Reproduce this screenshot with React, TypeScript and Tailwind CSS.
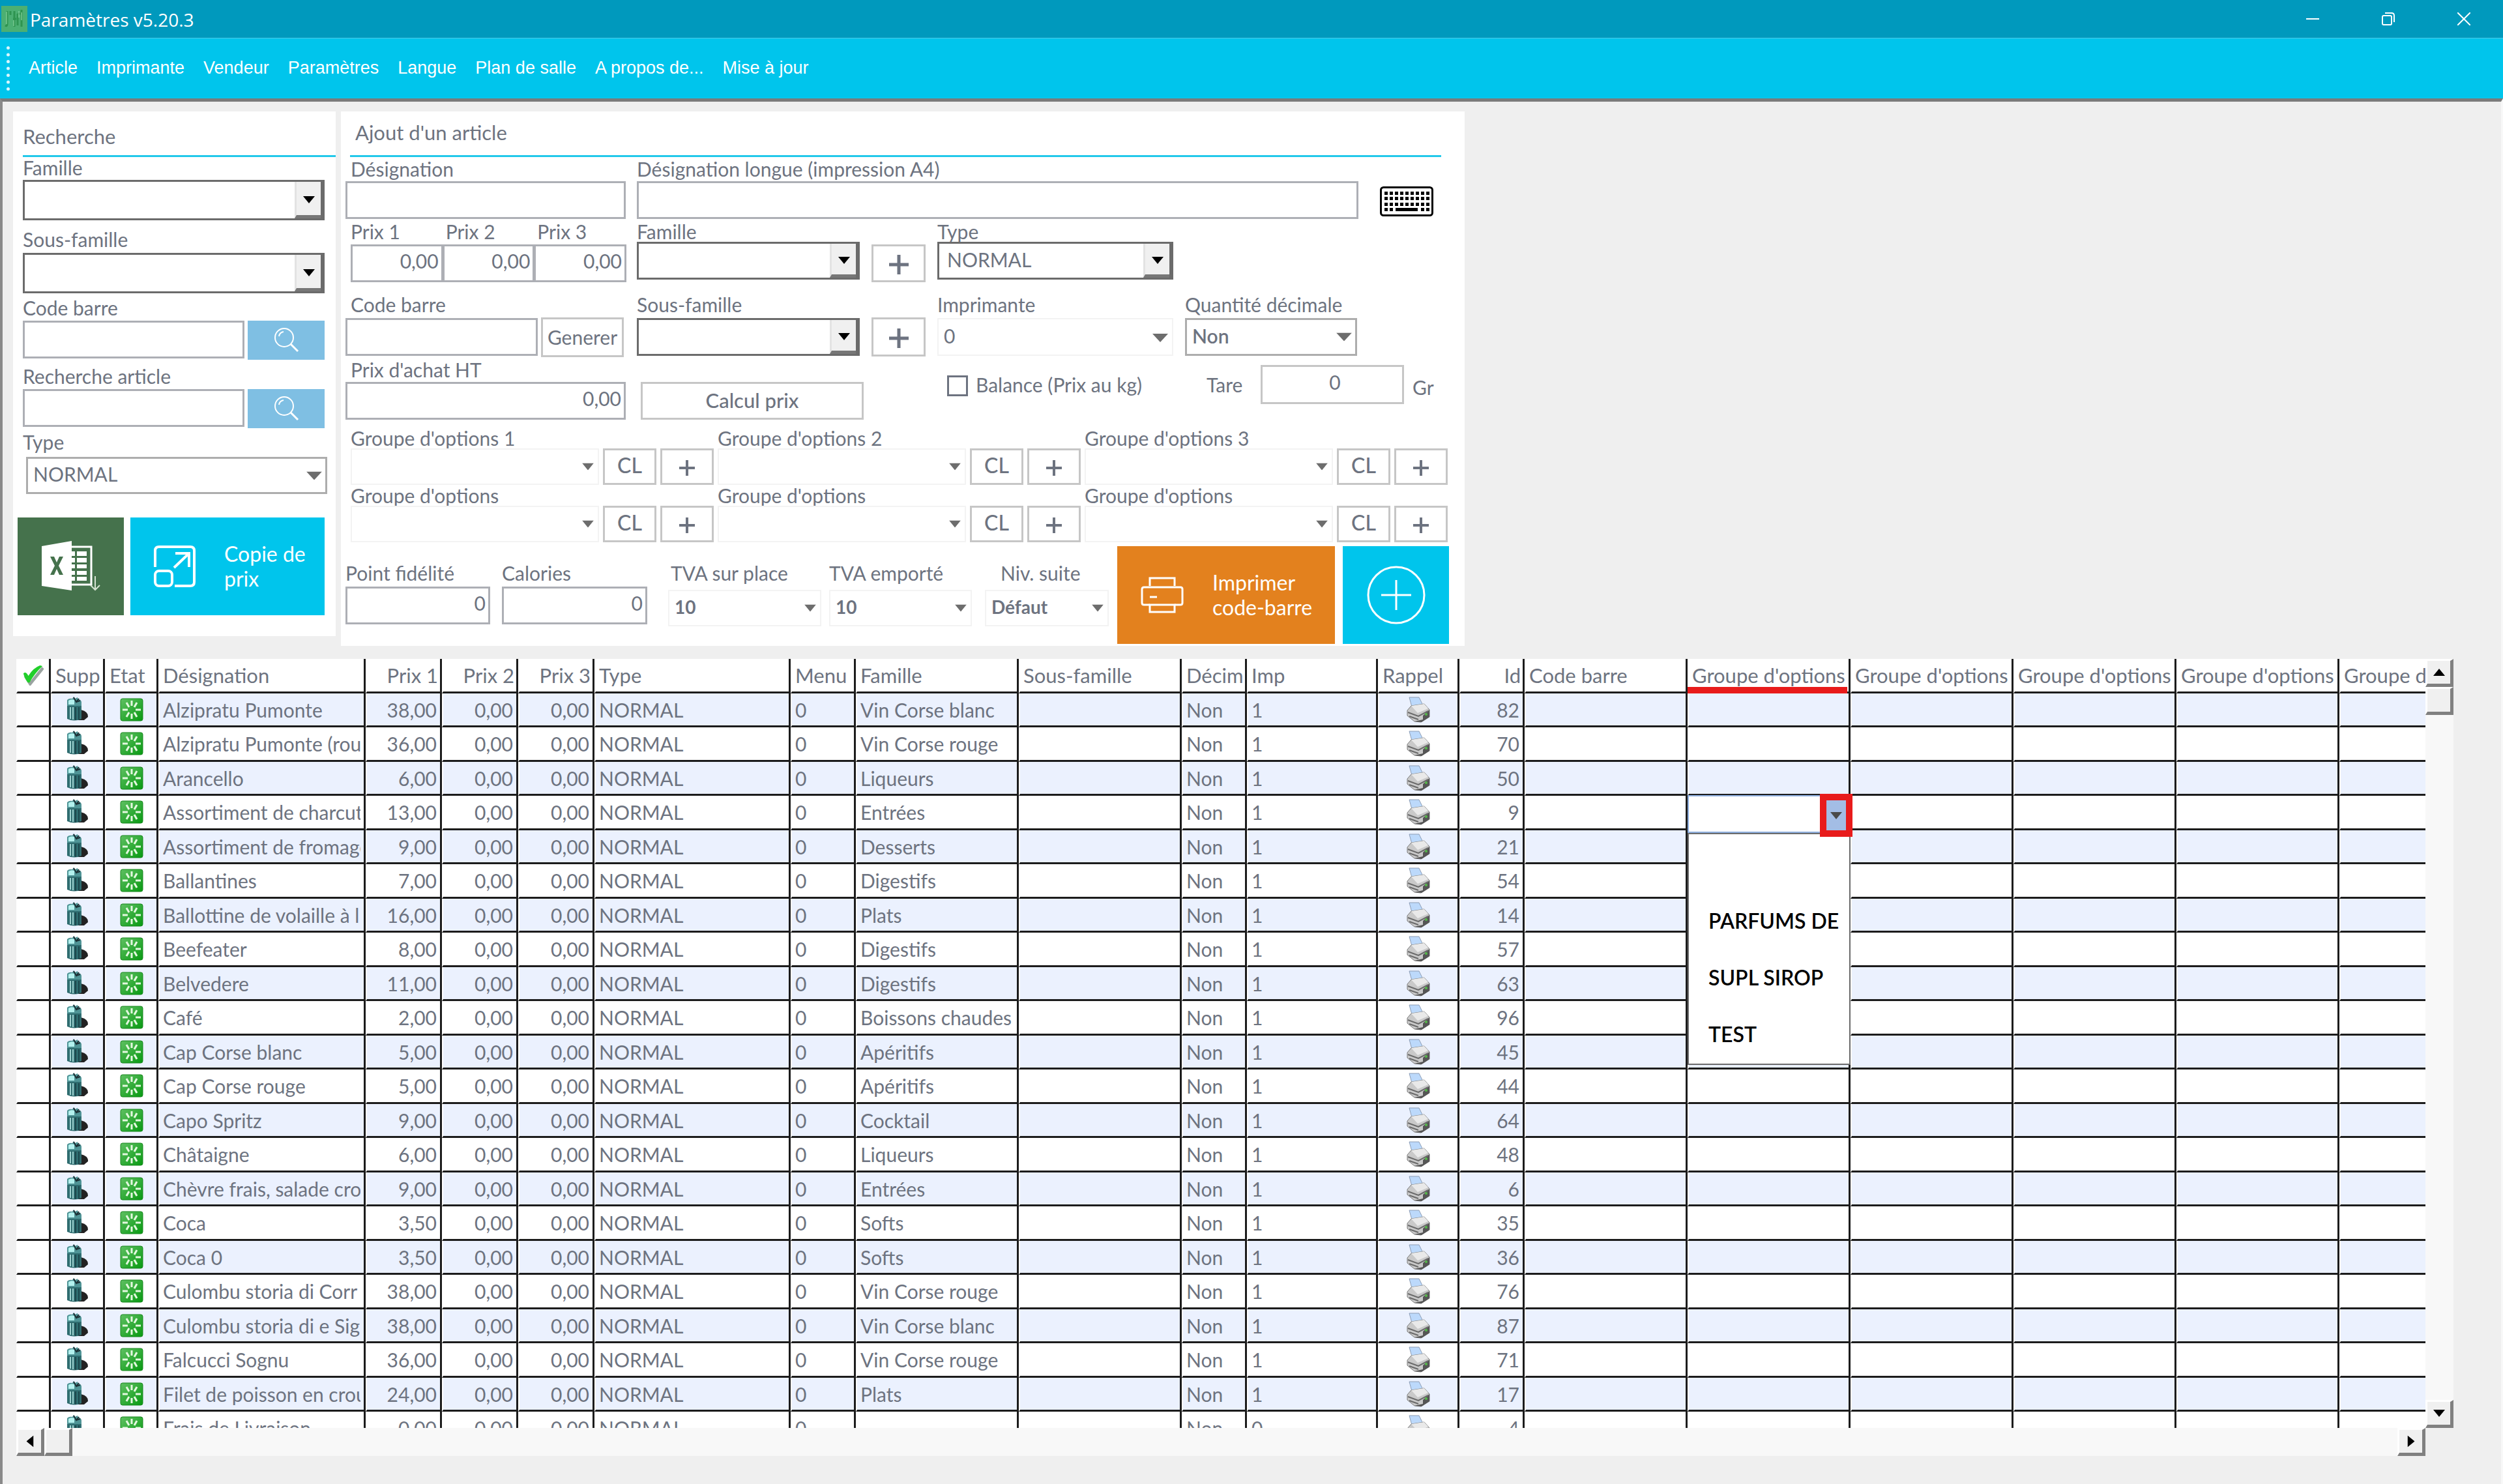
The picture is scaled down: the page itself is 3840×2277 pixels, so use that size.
import { useId } from 'react';
import type { ReactNode } from 'react';
import clsx from 'clsx';

type Article = {
  name: string;
  price: string;
  family: string;
  id: number;
  imp?: string;
};

const menuItems = [
  'Article',
  'Imprimante',
  'Vendeur',
  'Paramètres',
  'Langue',
  'Plan de salle',
  'A propos de...',
  'Mise à jour',
];

const articles: Article[] = [
  { name: 'Alzipratu Pumonte', price: '38,00', family: 'Vin Corse blanc', id: 82 },
  { name: 'Alzipratu Pumonte (rou', price: '36,00', family: 'Vin Corse rouge', id: 70 },
  { name: 'Arancello', price: '6,00', family: 'Liqueurs', id: 50 },
  { name: 'Assortiment de charcut', price: '13,00', family: 'Entrées', id: 9 },
  { name: 'Assortiment de fromage', price: '9,00', family: 'Desserts', id: 21 },
  { name: 'Ballantines', price: '7,00', family: 'Digestifs', id: 54 },
  { name: 'Ballottine de volaille à l', price: '16,00', family: 'Plats', id: 14 },
  { name: 'Beefeater', price: '8,00', family: 'Digestifs', id: 57 },
  { name: 'Belvedere', price: '11,00', family: 'Digestifs', id: 63 },
  { name: 'Café', price: '2,00', family: 'Boissons chaudes', id: 96 },
  { name: 'Cap Corse blanc', price: '5,00', family: 'Apéritifs', id: 45 },
  { name: 'Cap Corse rouge', price: '5,00', family: 'Apéritifs', id: 44 },
  { name: 'Capo Spritz', price: '9,00', family: 'Cocktail', id: 64 },
  { name: 'Châtaigne', price: '6,00', family: 'Liqueurs', id: 48 },
  { name: 'Chèvre frais, salade cro', price: '9,00', family: 'Entrées', id: 6 },
  { name: 'Coca', price: '3,50', family: 'Softs', id: 35 },
  { name: 'Coca 0', price: '3,50', family: 'Softs', id: 36 },
  { name: 'Culombu storia di Corr', price: '38,00', family: 'Vin Corse rouge', id: 76 },
  { name: 'Culombu storia di e Sig', price: '38,00', family: 'Vin Corse blanc', id: 87 },
  { name: 'Falcucci Sognu', price: '36,00', family: 'Vin Corse rouge', id: 71 },
  { name: 'Filet de poisson en crou', price: '24,00', family: 'Plats', id: 17 },
  { name: 'Frais de Livraison', price: '0,00', family: '', id: 4, imp: '0' },
];

const columns = [
  { label: '', width: 'w-[53px]' },
  { label: 'Supp', width: 'w-[83px]' },
  { label: 'Etat', width: 'w-[82px]' },
  { label: 'Désignation', width: 'w-[318px]' },
  { label: 'Prix 1', width: 'w-[117px]', right: true },
  { label: 'Prix 2', width: 'w-[117px]', right: true },
  { label: 'Prix 3', width: 'w-[117px]', right: true },
  { label: 'Type', width: 'w-[301px]' },
  { label: 'Menu', width: 'w-[100px]' },
  { label: 'Famille', width: 'w-[250px]' },
  { label: 'Sous-famille', width: 'w-[250px]' },
  { label: 'Décim', width: 'w-[100px]' },
  { label: 'Imp', width: 'w-[201px]' },
  { label: 'Rappel', width: 'w-[125px]' },
  { label: 'Id', width: 'w-[100px]', right: true },
  { label: 'Code barre', width: 'w-[250px]' },
  { label: "Groupe d'options", width: 'w-[250px]', marked: true },
  { label: "Groupe d'options", width: 'w-[250px]' },
  { label: "Groupe d'options", width: 'w-[250px]' },
  { label: "Groupe d'options", width: 'w-[250px]' },
  { label: "Groupe d'options", width: 'w-[250px]' },
];

/* ---------- Icons ---------- */

function AppIcon() {
  return (
    <svg viewBox="0 0 40 40" className="w-10 h-10">
      <rect width="40" height="40" fill="#4caf72" />
      <path d="M9 8v20q0 4-3 2M14 8v6M20 8v24M25 12v18M31 6v26M18 20h5M25 12h7" fill="none" stroke="#2e9450" strokeWidth="3" />
      <path d="M8 9v19M19 22v9M27 8v10M31 10v12" fill="none" stroke="#9be0b0" strokeWidth="1" />
    </svg>
  );
}

function SearchIcon() {
  return (
    <svg viewBox="0 0 40 40" className="w-10 h-10" fill="none" stroke="#fff" strokeWidth="2">
      <circle cx="17" cy="16" r="14" />
      <path d="M9 14q1-6 7-7" />
      <path d="M27 26l11 11" strokeWidth="3" />
    </svg>
  );
}

function KeyboardIcon() {
  const cols = [9, 17, 25, 33, 41, 49, 57, 65, 73];
  return (
    <svg viewBox="0 0 82 46" className="w-[82px] h-[46px]">
      <rect x="1.5" y="1.5" width="79" height="43" rx="4" fill="#fff" stroke="#000" strokeWidth="3" />
      {[8, 16, 25].map((y) => cols.map((x) => <rect key={`${x}-${y}`} x={x - 2} y={y} width="5" height="5" />))}
      {[9, 17, 65, 73].map((x) => (
        <rect key={x} x={x - 2} y="33" width="5" height="5" />
      ))}
      <rect x="24" y="33" width="34" height="5" />
    </svg>
  );
}

function ExcelIcon() {
  return (
    <svg viewBox="0 0 92 78" className="w-[92px] h-[78px]">
      <path d="M46 9h31v58H46" fill="none" stroke="#fff" strokeWidth="3" />
      <path
        d="M46 16h6v7h-6zM55 16h15v7H55zM46 26h6v7h-6zM55 26h15v7H55zM46 36h6v6h-6zM55 36h15v6H55zM46 46h6v6h-6zM55 46h15v6H55zM46 55h6v6h-6zM55 55h15v6H55z"
        fill="#fff"
      />
      <path d="M1 8L47 0v76L1 69z" fill="#fff" />
      <path d="M14 24h6l4 9 4-9h6l-7 14 7 14h-6l-4-9-4 9h-6l7-14z" fill="#45724c" />
      <path d="M83 54v20M76 68l7 7 7-7" fill="none" stroke="#d5e2d2" strokeWidth="2" />
    </svg>
  );
}

function CopyIcon() {
  return (
    <svg viewBox="0 0 64 64" className="w-16 h-16" fill="none" stroke="#fff" strokeWidth="4">
      <path d="M2 33V8q0-6 6-6h48q6 0 6 6v48q0 6-6 6H32" />
      <rect x="2" y="39" width="26" height="23" rx="6" />
      <path d="M31 34L53 13M33 12h21v21" />
    </svg>
  );
}

function PrinterIcon() {
  return (
    <svg viewBox="0 0 66 58" className="w-[66px] h-[58px]" fill="none" stroke="#fff" strokeWidth="3">
      <path d="M14 15V3h38v12" />
      <path d="M14 44H5q-3 0-3-3V20q0-3 3-3h56q3 0 3 3v21q0 3-3 3h-9" />
      <path d="M14 44h38v11H14zM14 32h11" />
    </svg>
  );
}

function CirclePlusIcon() {
  return (
    <svg viewBox="0 0 90 90" className="w-[90px] h-[90px]" fill="none" stroke="#fff" strokeWidth="3">
      <circle cx="45" cy="45" r="43" />
      <path d="M45 22v46M22 45h46" />
    </svg>
  );
}

function CheckIcon() {
  return (
    <svg viewBox="0 0 34 34" className="ml-[3px] w-8 h-8">
      <path d="M4 18l8 13L33 5" fill="none" stroke="#9aa3a0" strokeWidth="5" />
      <path d="M1 14q4-4 8 4Q17 5 28 1l4 1Q19 14 11 29H8Q2 20 1 14z" fill="#21cf2a" />
    </svg>
  );
}

function BinIcon() {
  return (
    <svg viewBox="0 0 34 38" className="w-[34px] h-[38px]">
      <path d="M22 20q12 3 11 11l-6 5h-9z" fill="#222" />
      <path d="M1 10h22v24q-11 5-22 0z" fill="#2f6d70" />
      <path d="M1 12V5q3-3 8-2l2-3 2 3 4-2 1 3q4 0 5 4v6H1z" fill="#4f9496" />
      <path d="M3 11V6q4-3 9-1v7H3z" fill="#b4f1ee" />
      <path d="M6 16v18M10 16v19" stroke="#9fd3d1" strokeWidth="2" />
      <path d="M14 16v20M19 16v19" stroke="#1c474c" strokeWidth="2" />
      <path d="M11 1l4 7 4-5M15 8l6-2" stroke="#1c3035" strokeWidth="2" fill="none" />
    </svg>
  );
}

function StateIcon() {
  return (
    <svg viewBox="0 0 36 36" className="w-9 h-9">
      <defs>
        <linearGradient id="state" x1="0" y1="0" x2="1" y2="1">
          <stop offset="0" stopColor="#5fc062" />
          <stop offset="1" stopColor="#089a12" />
        </linearGradient>
      </defs>
      <rect x="1" y="1" width="34" height="34" rx="3" fill="url(#state)" stroke="#16861d" />
      <path
        d="M18 4v8M18 24v8M4 18h8M24 18h8M10 7l4 7M22 22l4 7M26 7l-4 7M10 29l4-7"
        stroke="#e3f8df"
        strokeWidth="3"
      />
    </svg>
  );
}

function RowPrinterIcon() {
  return (
    <svg viewBox="0 0 38 40" className="w-[38px] h-10">
      <path d="M5 1h15l7 14-17 4z" fill="#bcd9fb" stroke="#8d9db5" strokeWidth="1" />
      <path d="M2 21l6-7 20-3 8 9v11l-13 8-10-1-11-9z" fill="#c9c9c9" stroke="#7b7b7b" strokeWidth="1" />
      <path d="M8 14l20-3 6 7-16 7z" fill="#e9e9e9" />
      <path d="M26 29l10-9v11l-12 8-11-1 13-3z" fill="#555" />
      <path d="M3 24l16 6 15-8M5 30l14 5" stroke="#6a6a6a" strokeWidth="2" fill="none" />
      <circle cx="31" cy="27" r="2" fill="#54b948" />
    </svg>
  );
}

function Caret({ className }: { className?: string }) {
  return (
    <svg viewBox="0 0 20 10" className={className} fill="currentColor" preserveAspectRatio="none">
      <path d="M0 0h20L10 10z" />
    </svg>
  );
}

/* ---------- Form controls ---------- */

function Field({
  label,
  className,
  labelClass,
  children,
}: {
  label: string;
  className?: string;
  labelClass?: string;
  children: (id: string) => ReactNode;
}) {
  const id = useId();
  return (
    <div className={clsx('flex flex-col', className)}>
      <label htmlFor={id} className={clsx('whitespace-nowrap text-[30px] leading-8', labelClass)}>
        {label}
      </label>
      {children(id)}
    </div>
  );
}

function TextBox({ id, value = '', className }: { id?: string; value?: string; className?: string }) {
  return (
    <input
      id={id}
      defaultValue={value}
      className={clsx('h-[58px] w-full min-w-0 border-[3px] border-[#adafb5] bg-white px-1 pb-2 text-[30px]', className)}
    />
  );
}

type Variant = 'classic' | 'flat' | 'light';

function Select({
  id,
  value = '',
  variant = 'light',
  className,
}: {
  id?: string;
  value?: string;
  variant?: Variant;
  className?: string;
}) {
  return (
    <div className={clsx('relative flex', className)}>
      <select
        id={id}
        defaultValue={value}
        className={clsx(
          'w-full appearance-none bg-white',
          variant === 'classic' && 'border-[3px] border-r-[6px] border-[#6b6b6b] pb-1 pl-3 text-[30px]',
          variant === 'flat' && 'border-[3px] border-[#adadad] pb-1 pl-2 text-[30px]',
          variant === 'light' && 'border-2 border-[#f3f3f3] pb-1 pl-2 text-[28px]',
        )}
      >
        <option>{value}</option>
      </select>
      {variant === 'classic' ? (
        <span className="pointer-events-none absolute inset-y-[3px] right-[6px] flex w-10 items-center justify-center border-b-[5px] border-l-[3px] border-b-[#777] border-l-[#e3e3e3] bg-[#f0f0f0] pt-1">
          <Caret className="h-[11px] w-[18px] text-black" />
        </span>
      ) : (
        <Caret
          className={clsx(
            'pointer-events-none absolute top-1/2 right-2 -translate-y-1/2 text-[#6d6d6d]',
            variant === 'flat' ? 'h-[13px] w-6' : 'h-[11px] w-[18px]',
          )}
        />
      )}
    </div>
  );
}

function PlainButton({ className, children, label }: { className?: string; children: ReactNode; label?: string }) {
  return (
    <button
      aria-label={label}
      className={clsx('flex items-center justify-center border-[3px] border-[#c6c6c6] bg-white', className)}
    >
      {children}
    </button>
  );
}

function PlusButton({ className, big }: { className?: string; big?: boolean }) {
  return (
    <PlainButton label="Ajouter" className={className}>
      <svg viewBox="0 0 30 30" className={big ? 'mt-1 w-[30px] h-[30px]' : 'mt-1 w-6 h-6'}>
        <path d="M15 0v30M0 15h30" stroke="#6d7380" strokeWidth="5" />
      </svg>
    </PlainButton>
  );
}

function SearchButton() {
  return (
    <button aria-label="Rechercher" className="flex w-[118px] items-center justify-center bg-[#7fbfe3]">
      <SearchIcon />
    </button>
  );
}

function OptionGroup({ label }: { label: string }) {
  return (
    <Field label={label} className="flex-1">
      {(id) => (
        <div className="flex h-14 gap-[6px]">
          <Select id={id} className="flex-1" />
          <PlainButton className="w-[82px] pb-1 text-[32px] font-medium">CL</PlainButton>
          <PlusButton className="w-[82px]" />
        </div>
      )}
    </Field>
  );
}

/* ---------- Panels ---------- */

function TitleBar() {
  return (
    <header className="flex h-[59px] shrink-0 items-center border-b border-[#4fcbe6] bg-[#0099bd] pl-[2px] text-white">
      <AppIcon />
      <h1 className="ml-1 flex-1 pt-[2px] font-['Open_Sans',sans-serif] text-[28px]">Paramètres v5.20.3</h1>
      <div className="flex pr-[2px]">
        <button aria-label="Réduire" className="flex w-29 justify-center">
          <svg viewBox="0 0 20 20" className="w-5 h-5" fill="none" stroke="#fff" strokeWidth="2">
            <path d="M0 10h20" />
          </svg>
        </button>
        <button aria-label="Restaurer" className="flex w-29 justify-center">
          <svg viewBox="0 0 20 20" className="w-5 h-5" fill="none" stroke="#fff" strokeWidth="2">
            <rect x="1" y="5" width="14" height="14" rx="2" />
            <path d="M5 1h10q4 0 4 4v10" />
          </svg>
        </button>
        <button aria-label="Fermer" className="flex w-29 justify-center">
          <svg viewBox="0 0 20 20" className="w-5 h-5" fill="none" stroke="#fff" strokeWidth="2">
            <path d="M0 0l20 20M20 0L0 20" />
          </svg>
        </button>
      </div>
    </header>
  );
}

function MenuBar() {
  return (
    <nav className="flex h-[92px] shrink-0 items-center bg-[#00c5ec] pl-[10px] font-['Liberation_Sans',Arial,sans-serif] text-[27px] text-white">
      <span className="mr-[29px] h-[68px] w-0 border-l-[5px] border-dotted border-[#d9f7fd]" />
      <ul className="flex gap-[29px] pb-[2px]">
        {menuItems.map((item) => (
          <li key={item}>
            <a href="#">{item}</a>
          </li>
        ))}
      </ul>
    </nav>
  );
}

function SearchPanel() {
  return (
    <section className="flex h-[805px] w-[495px] flex-col bg-white pl-[15px]">
      <h2 className="border-b-[3px] border-[#22c8ea] pt-5 pb-[11px] text-[31px] leading-9">Recherche</h2>
      <div className="flex flex-col pr-[17px]">
        <Field label="Famille">
          {(id) => <Select id={id} variant="classic" className="mt-[3px] h-[62px]" />}
        </Field>
        <Field label="Sous-famille" className="mt-[13px]">
          {(id) => <Select id={id} variant="classic" className="mt-[5px] h-[62px]" />}
        </Field>
        <Field label="Code barre" className="mt-[6px]">
          {(id) => (
            <div className="mt-[4px] flex h-15 gap-[5px]">
              <TextBox id={id} className="h-15 flex-1" />
              <SearchButton />
            </div>
          )}
        </Field>
        <Field label="Recherche article" className="mt-[9px]">
          {(id) => (
            <div className="mt-[4px] flex h-15 gap-[5px]">
              <TextBox id={id} className="h-15 flex-1" />
              <SearchButton />
            </div>
          )}
        </Field>
        <Field label="Type" className="mt-[5px]">
          {(id) => <Select id={id} value="NORMAL" variant="flat" className="mt-[7px] -mr-1 ml-[5px] h-[57px]" />}
        </Field>
      </div>
      <div className="-ml-2 mt-[36px] flex gap-[10px]">
        <button aria-label="Exporter vers Excel" className="flex h-[150px] w-[163px] items-center justify-center bg-[#45724c]">
          <ExcelIcon />
        </button>
        <button className="flex h-[150px] w-[298px] items-center gap-11 bg-[#00c5ec] pl-9 text-left text-[32px] leading-[38px] text-white">
          <CopyIcon />
          <span>
            Copie de
            <br />
            prix
          </span>
        </button>
      </div>
    </section>
  );
}

function ArticlePanel() {
  const checkId = useId();
  const tareId = useId();
  return (
    <section className="flex h-[820px] w-[1724px] flex-col bg-white pl-[7px]">
      <h2 className="mr-9 ml-[7px] border-b-[3px] border-[#22c8ea] pt-[14px] pb-[17px] pl-2 text-[31px] leading-9">
        Ajout d'un article
      </h2>

      <div className="mt-[2px] flex items-end">
        <Field label="Désignation" labelClass="pl-2" className="w-[430px]">
          {(id) => <TextBox id={id} className="mt-[3px]" />}
        </Field>
        <Field label="Désignation longue (impression A4)" className="ml-[17px] w-[1107px]">
          {(id) => <TextBox id={id} className="mt-[3px]" />}
        </Field>
        <button aria-label="Clavier" className="mb-1 ml-[33px]">
          <KeyboardIcon />
        </button>
      </div>

      <div className="mt-[3px] flex items-start">
        <div className="flex w-[430px] pl-2">
          {['Prix 1', 'Prix 2', 'Prix 3'].map((label, i) => (
            <Field key={label} label={label} className="-mr-px flex-1" labelClass={i > 0 ? 'pl-[5px]' : ''}>
              {(id) => <TextBox id={id} value="0,00" className="mt-[4px] text-right" />}
            </Field>
          ))}
        </div>
        <Field label="Famille" className="ml-[17px] w-[342px]">
          {(id) => <Select id={id} variant="classic" className="h-[58px]" />}
        </Field>
        <PlusButton big className="mt-9 ml-[18px] h-[58px] w-[83px]" />
        <Field label="Type" className="ml-[18px] w-[362px]">
          {(id) => <Select id={id} value="NORMAL" variant="classic" className="h-[58px]" />}
        </Field>
      </div>

      <div className="mt-[18px] flex items-start">
        <Field label="Code barre" labelClass="pl-2" className="w-[295px]">
          {(id) => <TextBox id={id} className="mt-[5px]" />}
        </Field>
        <PlainButton className="mt-9 ml-[5px] h-[61px] w-[127px] text-[30px]">Generer</PlainButton>
        <Field label="Sous-famille" className="ml-5 w-[342px]">
          {(id) => <Select id={id} variant="classic" className="mt-[5px] h-[58px]" />}
        </Field>
        <PlusButton big className="mt-9 ml-[18px] h-[60px] w-[83px]" />
        <Field label="Imprimante" className="ml-[18px] w-[362px]">
          {(id) => (
            <div className="relative mt-[5px] flex h-[58px]">
              <select id={id} defaultValue="0" className="w-full appearance-none border-2 border-[#f3f3f3] pb-1 pl-2 text-[30px]">
                <option>0</option>
              </select>
              <Caret className="pointer-events-none absolute top-6 right-2 h-[13px] w-6 text-[#6d6d6d]" />
            </div>
          )}
        </Field>
        <Field label="Quantité décimale" className="ml-[18px] w-[264px]">
          {(id) => <Select id={id} value="Non" variant="flat" className="mt-[5px] h-[58px] font-semibold" />}
        </Field>
      </div>

      <div className="mt-[3px] flex items-end">
        <Field label="Prix d'achat HT" labelClass="pl-2" className="w-[430px]">
          {(id) => <TextBox id={id} value="0,00" className="mt-[3px] text-right" />}
        </Field>
        <PlainButton className="ml-[23px] h-[58px] w-[342px] pb-[2px] text-[31px] font-medium">Calcul prix</PlainButton>
        <div className="mb-[30px] ml-[128px] flex w-[398px] items-center gap-3 text-[30px] leading-10">
          <input
            type="checkbox"
            id={checkId}
            className="h-8 w-8 appearance-none border-[3px] border-[#6d7380] bg-white"
          />
          <label htmlFor={checkId} className="pb-1">
            Balance (Prix au kg)
          </label>
        </div>
        <div className="mb-[20px] flex items-center text-[30px] leading-[60px]">
          <label htmlFor={tareId} className="w-[83px]">
            Tare
          </label>
          <input
            id={tareId}
            defaultValue="0"
            className="h-[60px] w-[220px] border-[3px] border-[#c6c6c6] pb-2 pl-2 text-center text-[30px]"
          />
          <span className="ml-[13px] pt-2">Gr</span>
        </div>
      </div>

      <div className="mt-3 mr-[26px] ml-2 flex gap-[6px]">
        <OptionGroup label="Groupe d'options 1" />
        <OptionGroup label="Groupe d'options 2" />
        <OptionGroup label="Groupe d'options 3" />
      </div>
      <div className="mr-[26px] ml-2 flex gap-[6px]">
        <OptionGroup label="Groupe d'options" />
        <OptionGroup label="Groupe d'options" />
        <OptionGroup label="Groupe d'options" />
      </div>

      <div className="mt-[6px] flex items-start">
        <Field label="Point fidélité" className="mt-[25px] w-[222px]">
          {(id) => <TextBox id={id} value="0" className="mt-[5px] text-right" />}
        </Field>
        <Field label="Calories" className="mt-[25px] ml-[18px] w-[223px]">
          {(id) => <TextBox id={id} value="0" className="mt-[5px] text-right" />}
        </Field>
        <Field label="TVA sur place" className="mt-[25px] ml-8 w-[235px]" labelClass="pl-1">
          {(id) => <Select id={id} value="10" className="mt-[10px] h-14 font-bold" />}
        </Field>
        <Field label="TVA emporté" className="mt-[25px] ml-3 w-[219px]">
          {(id) => <Select id={id} value="10" className="mt-[10px] h-14 font-bold" />}
        </Field>
        <Field label="Niv. suite" className="mt-[25px] ml-5 w-[190px]" labelClass="pl-6">
          {(id) => <Select id={id} value="Défaut" className="mt-[10px] h-14 font-bold" />}
        </Field>
        <button className="ml-[13px] flex h-[150px] w-[334px] items-center gap-11 bg-[#e3811e] pl-9 text-left text-[32px] leading-[38px] text-white">
          <PrinterIcon />
          <span>
            Imprimer
            <br />
            code-barre
          </span>
        </button>
        <button aria-label="Ajouter l'article" className="ml-3 flex h-[150px] w-[163px] items-center justify-center bg-[#00c5ec]">
          <CirclePlusIcon />
        </button>
      </div>
    </section>
  );
}

/* ---------- Articles grid ---------- */

function OptionsDropdown() {
  return (
    <div className="absolute -top-px -left-[2px] z-10 w-[250px] text-[32px] text-black">
      <div className="flex h-[58px] border-2 border-[#8fb0e0] bg-white" />
      <button
        aria-label="Ouvrir la liste"
        className="absolute -top-[2px] -right-[3px] flex h-[66px] w-[50px] items-center justify-center border-10 border-[#e81b1b] bg-[#a3bde5]"
      >
        <Caret className="h-[11px] w-[18px] text-[#4a4a4a]" />
      </button>
      <ul role="listbox" aria-label="Groupe d'options" className="border-2 border-[#6b6b6b] bg-white pb-1 font-semibold">
        {['', 'PARFUMS DE', 'SUPL SIROP', 'TEST'].map((option) => (
          <li
            key={option}
            role="option"
            aria-selected={option === ''}
            className="h-[87px] overflow-hidden pt-[17px] pl-[30px] leading-[58px] whitespace-nowrap"
          >
            {option}
          </li>
        ))}
      </ul>
    </div>
  );
}

function ArticleRow({ article, open }: { article: Article; open: boolean }) {
  const texts = ['NORMAL', '0', article.family, '', 'Non', article.imp ?? '1'];
  const cell = 'overflow-hidden whitespace-nowrap border-r-[3px] border-b-[3px] border-l-2 border-r-[#1c1c1c] border-b-[#1c1c1c] border-l-white p-0 px-[5px]';
  return (
    <tr className="h-[52px] odd:bg-[#ebf1fe] even:h-[53px]">
      <td className={clsx(cell, 'bg-white')} />
      <td className={cell}>
        <div className="flex h-10 justify-center">
          <BinIcon />
        </div>
      </td>
      <td className={cell}>
        <div className="flex h-10 items-center justify-center">
          <StateIcon />
        </div>
      </td>
      <td className={cell}>
        <div className="overflow-hidden">{article.name}</div>
      </td>
      {[article.price, '0,00', '0,00'].map((price, i) => (
        <td key={i} className={clsx(cell, 'text-right')}>
          {price}
        </td>
      ))}
      {texts.map((text, i) => (
        <td key={i} className={cell}>
          {text}
        </td>
      ))}
      <td className={cell}>
        <div className="flex h-10 justify-center">
          <RowPrinterIcon />
        </div>
      </td>
      <td className={clsx(cell, 'text-right')}>{article.id}</td>
      <td className={cell} />
      <td className={clsx(cell, open && 'relative overflow-visible')}>{open && <OptionsDropdown />}</td>
      <td className={cell} />
      <td className={cell} />
      <td className={cell} />
      <td className={cell} />
    </tr>
  );
}

function ScrollButton({ label, className, children }: { label: string; className?: string; children?: ReactNode }) {
  return (
    <button
      aria-label={label}
      className={clsx(
        'flex h-[43px] w-[43px] shrink-0 items-center justify-center border-t-[3px] border-r-[5px] border-b-[5px] border-l-[3px] border-t-white border-r-[#808080] border-b-[#808080] border-l-white bg-[#f0f0f0]',
        className,
      )}
    >
      {children}
    </button>
  );
}

function ArticleGrid() {
  return (
    <section className="mt-5 mr-[73px] grid min-h-0 flex-1 grid-cols-[1fr_43px] grid-rows-[1fr_43px] pl-[21px]">
      <div className="min-h-0 overflow-hidden bg-white">
        <table className="w-full table-fixed border-separate border-spacing-0 text-[30px] leading-9">
          <thead>
            <tr className="h-[53px] text-left text-[31px]">
              {columns.map((column, i) => (
                <th
                  key={i}
                  className={clsx(
                    'relative overflow-hidden border-r-[3px] border-b-[3px] border-l-2 border-r-[#1c1c1c] border-b-[#1c1c1c] border-l-white p-0 pr-[3px] pl-[5px] font-normal whitespace-nowrap',
                    column.width,
                    column.right && 'text-right',
                    column.marked && 'overflow-visible',
                  )}
                >
                  {i === 0 ? <CheckIcon /> : column.label}
                  {column.marked && <span className="absolute -bottom-[3px] -left-[2px] right-[2px] h-[10px] bg-[#e81b1b]" />}
                </th>
              ))}
            </tr>
          </thead>
          <tbody>
            {articles.map((article) => (
              <ArticleRow key={article.id} article={article} open={article.id === 9} />
            ))}
          </tbody>
        </table>
      </div>
      <div className="flex min-h-0 flex-col bg-[#f8f8f8]">
        <ScrollButton label="Haut">
          <Caret className="h-[11px] w-[18px] rotate-180 text-black" />
        </ScrollButton>
        <ScrollButton label="Position verticale" />
        <ScrollButton label="Bas" className="mt-auto">
          <Caret className="h-[11px] w-[18px] text-black" />
        </ScrollButton>
      </div>
      <div className="flex bg-[#f8f8f8]">
        <ScrollButton label="Gauche">
          <Caret className="h-[11px] w-[18px] rotate-90 text-black" />
        </ScrollButton>
        <ScrollButton label="Position horizontale" />
        <ScrollButton label="Droite" className="ml-auto">
          <Caret className="h-[11px] w-[18px] -rotate-90 text-black" />
        </ScrollButton>
      </div>
    </section>
  );
}

export default function App() {
  return (
    <div className="flex h-screen flex-col overflow-hidden bg-[#efefef] font-['Lato',sans-serif] text-[#6d7380]">
      <TitleBar />
      <MenuBar />
      <main className="flex min-h-0 flex-1 flex-col border-t-[5px] border-r-[3px] border-l-4 border-t-[#7b7b7b] border-r-[#f8f8f8] border-l-[#8a8a8a] pt-[15px] pb-[43px]">
        <div className="flex items-start gap-2 pl-4">
          <SearchPanel />
          <ArticlePanel />
        </div>
        <ArticleGrid />
      </main>
    </div>
  );
}
